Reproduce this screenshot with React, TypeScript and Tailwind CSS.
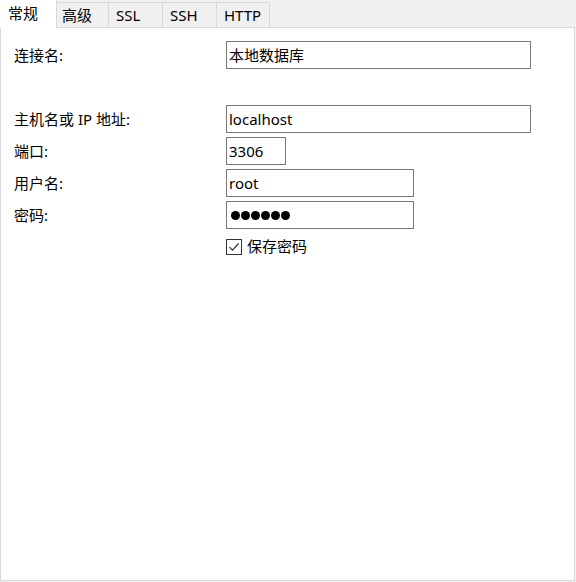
const tabs = [
  { label: "常规", w: "w-[57px] pl-[8px]", active: true },
  { label: "高级", w: "w-[52px] pl-[5px]" },
  { label: "SSL", w: "w-[54px] pl-[7px]" },
  { label: "SSH", w: "w-[54px] pl-[7px]" },
  { label: "HTTP", w: "w-[53px] pl-[7px]" },
];

const font = { fontFamily: '"Noto Sans", "Noto Sans CJK SC", sans-serif' };

function Field({ label, value, width, dots }: { label: string; value: string; width: string; dots?: boolean }) {
  return (
    <div className="flex h-[28px] items-center">
      <div className="w-[225px] pl-[13px] text-[15px] text-black">{label}</div>
      <div
        className={`flex h-[28px] ${width} items-center border border-[#7a7a7a] bg-white pl-[2px] text-[15px] text-black`}>
        {dots ? (
          <span className="flex gap-[1px] pl-[2px]">
            {Array.from({ length: 6 }).map((_, i) => (
              <span key={i} className="inline-block h-[9px] w-[9px] rounded-full bg-black" />
            ))}
          </span>
        ) : (
          value
        )}
      </div>
    </div>
  );
}

export default function App() {
  return (
    <div className="flex h-[582px] w-[576px] flex-col bg-[#f0f0f0]" style={font}>
      <div className="relative z-10 flex h-[28px] items-start">
        {tabs.map((t) =>
          t.active ? (
            <div
              key={t.label}
              className={`${t.w} h-[28px] border-r border-[#d9d9d9] bg-white pt-[3px] text-[15px] leading-[20px] text-black`}>
              {t.label}
            </div>
          ) : (
            <div
              key={t.label}
              className={`${t.w} mt-[2px] flex h-[25px] items-center border-r border-t border-[#d9d9d9] bg-[#f0f0f0] text-[15px] text-black`}>
              {t.label}
            </div>
          ),
        )}
      </div>
      <div className="-mt-[1px] h-[554px] w-[575px] border border-[#d9d9d9] bg-white">
        <div className="flex flex-col pt-[13px]">
          <Field label="连接名:" value="本地数据库" width="w-[305px]" />
          <div className="h-[36px]" />
          <div className="flex flex-col gap-[4px]">
            <Field label="主机名或 IP 地址:" value="localhost" width="w-[305px]" />
            <Field label="端口:" value="3306" width="w-[60px]" />
            <Field label="用户名:" value="root" width="w-[188px]" />
            <Field label="密码:" value="" width="w-[188px]" dots />
          </div>
          <div className="mt-[7px] flex items-center gap-[5px] pl-[225px]">
            <svg width="16" height="16" viewBox="0 0 16 16">
              <rect x="0.5" y="0.5" width="15" height="15" fill="white" stroke="#333" />
              <path d="M3.5 8.2 L6.5 11.2 L12.5 4.5" fill="none" stroke="#333" strokeWidth="1.2" />
            </svg>
            <span className="-mt-[1px] text-[15px] text-black">保存密码</span>
          </div>
        </div>
      </div>
    </div>
  );
}
